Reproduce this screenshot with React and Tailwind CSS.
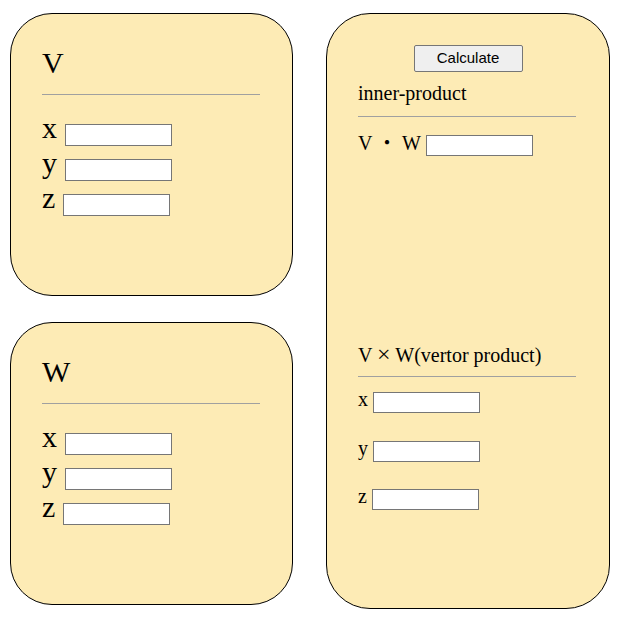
import { useState } from "react";

const serif = "font-['Liberation_Serif','Noto_Sans_CJK_JP',serif]";

const Field = ({ className = "" }) => (
    <input
        type="text"
        className={`w-[107px] border border-[#767676] bg-white px-[2px] text-[13px] font-['Liberation_Sans',sans-serif] outline-none ${className}`}
    />
);

const VectorBox = ({ name }) => {
    return (
        <div className="w-[283px] h-[283px] rounded-[42px] border border-black bg-[#fdebb5] pt-[31px] pl-[31px] pr-[32px]">
            <div className="text-[30px] leading-[35px]">{name}</div>
            <div className="mt-[14px] h-px bg-[#a0a0a0]"></div>
            <div className="mt-[15px] flex flex-col">
                {["x", "y", "z"].map(axis => (
                    <div key={axis} className="flex items-start h-[35px]">
                        <span className="text-[30px] leading-[35px]">{axis}</span>
                        <Field className="ml-[7.5px] mt-[14px] h-[22px]" />
                    </div>
                ))}
            </div>
        </div>
    );
};

const App = () => {
    const [clicked, setClicked] = useState(0);
    return (
        <div className={`${serif} text-black bg-white min-h-[622px] pl-[10px] pt-[13px] flex gap-[33px]`}>
            <div className="flex flex-col gap-[26px]">
                <VectorBox name="V" />
                <VectorBox name="W" />
            </div>
            <div className="w-[284px] h-[596px] rounded-[44px] border border-black bg-[#fdebb5] pt-[31px] pl-[31px] pr-[33px]">
                <div className="flex justify-center pl-[2px]">
                    <button
                        onClick={() => setClicked(clicked + 1)}
                        className="w-[109px] h-[27px] rounded-[2px] border border-[#767676] bg-[#efefef] text-[15px] font-['Liberation_Sans',sans-serif] text-black"
                    >
                        Calculate
                    </button>
                </div>
                <div className="mt-[10px] text-[20px] leading-[23px]">inner-product</div>
                <div className="mt-[11px] h-px bg-[#a0a0a0]"></div>
                <div className="mt-[15px] flex items-start">
                    <span className="text-[20px] leading-[23px] whitespace-pre">V ・ W</span>
                    <Field className="ml-[5px] mt-[3px] h-[21px]" />
                </div>
                <div className="mt-[186px] h-[23px] overflow-visible text-[20px] leading-[23px] whitespace-pre">
                    V <span className="text-[24px] leading-none">×</span> W(vertor product)
                </div>
                <div className="mt-[11px] h-px bg-[#a0a0a0]"></div>
                <div className="mt-[11px] flex flex-col">
                    {["x", "y", "z"].map(axis => (
                        <div key={axis} className="flex items-start h-[48.5px]">
                            <span className="text-[20px] leading-[23px]">{axis}</span>
                            <Field className="ml-[5px] mt-[4px] h-[21px]" />
                        </div>
                    ))}
                </div>
            </div>
        </div>
    );
};

export default App;
